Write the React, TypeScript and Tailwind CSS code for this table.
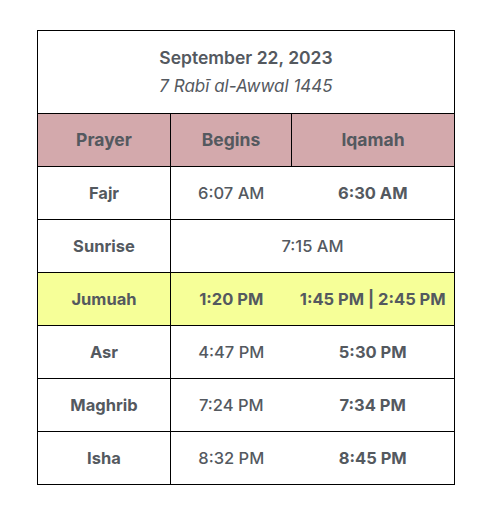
import React from 'react';

type Row = { name: string; begins: string; iqamah?: string; highlight?: boolean };

const ROWS: Row[] = [
  { name: 'Fajr', begins: '6:07 AM', iqamah: '6:30 AM' },
  { name: 'Sunrise', begins: '7:15 AM' },
  { name: 'Jumuah', begins: '1:20 PM', iqamah: '1:45 PM | 2:45 PM', highlight: true },
  { name: 'Asr', begins: '4:47 PM', iqamah: '5:30 PM' },
  { name: 'Maghrib', begins: '7:24 PM', iqamah: '7:34 PM' },
  { name: 'Isha', begins: '8:32 PM', iqamah: '8:45 PM' },
];

const App: React.FC = () => {
  return (
    <div className="min-h-[515px] bg-white pt-[30px] font-['Inter',sans-serif] text-[#54595f]">
      <table className="mx-auto w-[417px] table-fixed border-collapse border border-black">
        <colgroup>
          <col className="w-[133px]" />
          <col className="w-[121px]" />
          <col className="w-[163px]" />
        </colgroup>
        <thead>
          {/* Date heading */}
          <tr className="h-[83px]">
            <th colSpan={3} className="border border-black text-center">
              <div className="text-[17.5px] font-semibold leading-none">September 22, 2023</div>
              <div className="mt-[12px] text-[17px] font-normal italic leading-none">7 Rabī al-Awwal 1445</div>
            </th>
          </tr>
          <tr className="h-[53px] bg-[#d3a9ac] text-[17.5px] font-bold">
            <th className="border border-black">Prayer</th>
            <th className="border border-black">Begins</th>
            <th className="border border-black">Iqamah</th>
          </tr>
        </thead>
        <tbody className="text-[16.5px]">
          {ROWS.map((row) => (
            <tr key={row.name} className={`h-[53px] ${row.highlight ? 'bg-[#f6ff98]' : ''}`}>
              <td className="border border-black text-center font-bold">{row.name}</td>
              {row.iqamah ? (
                <>
                  <td className={`border-y border-black text-center ${row.highlight ? 'font-bold' : 'font-medium'}`}>
                    {row.begins}
                  </td>
                  <td className="border-y border-r border-black text-center font-bold whitespace-nowrap">{row.iqamah}</td>
                </>
              ) : (
                <td colSpan={2} className="border border-black text-center font-medium">{row.begins}</td>
              )}
            </tr>
          ))}
        </tbody>
      </table>
    </div>
  );
};

export default App;
